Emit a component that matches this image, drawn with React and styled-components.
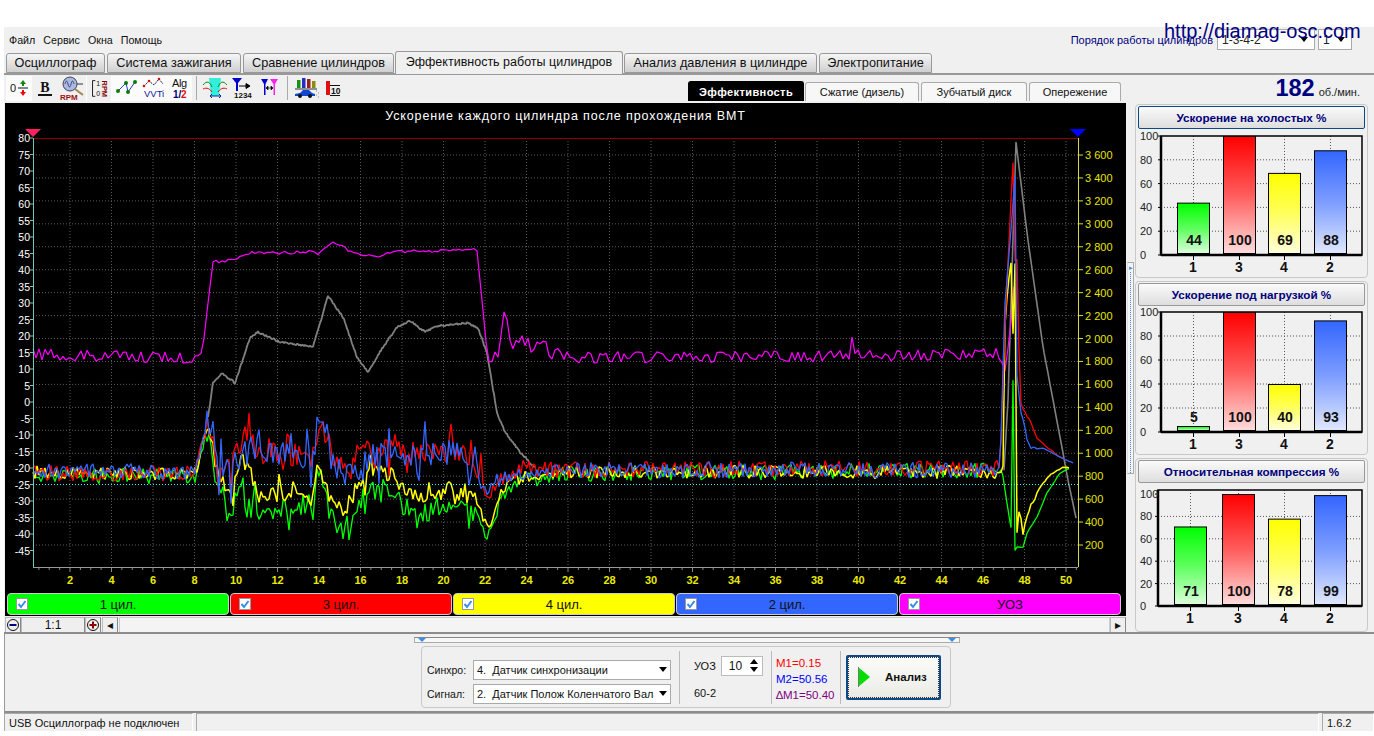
import styled, { createGlobalStyle } from 'styled-components'

const GlobalStyle = createGlobalStyle`
  html, body { margin: 0; padding: 0; background: #fff; }
  body { font-family: "Liberation Sans", Arial, sans-serif; }
  * { box-sizing: border-box; }
`

const Page = styled.div`
  width: 1374px;
  height: 736px;
  padding: 27px 0 5px 4px;
  background: #fff;
  position: relative;
  overflow: hidden;
`
const Win = styled.div`
  height: 704px;
  display: flex;
  flex-direction: column;
  background: #f0f0f0;
  color: #111;
`
const MenuBar = styled.div`
  height: 25px;
  display: flex;
  align-items: center;
  padding: 2px 22px 2px 5px;
  gap: 8px;
  font-size: 10.7px;
`
const OrderBox = styled.div`
  margin-left: auto;
  display: flex;
  align-items: center;
  gap: 3px;
  font-size: 11px;
  color: #000080;
`
const TopSelect = styled.div`
  width: ${p => p.$w}px;
  height: 21px;
  margin-left: ${p => p.$ml || 0}px;
  padding-left: 4px;
  background: #fff;
  border: 1px solid #aaa;
  display: flex;
  align-items: center;
  justify-content: space-between;
  font-size: 12px;
  color: #222;
`
const Arrow = styled.i`
  width: 0;
  height: 0;
  margin-right: 6px;
  border-left: 4px solid transparent;
  border-right: 4px solid transparent;
  border-top: 5px solid #000;
`
const SiteUrl = styled.div`
  position: absolute;
  left: 1164px;
  top: 19px;
  font-size: 20px;
  line-height: 24px;
  color: #000080;
  white-space: nowrap;
`
const TabStrip = styled.div`
  height: 23px;
  display: flex;
  align-items: flex-end;
  gap: 2px;
  padding-left: 2px;
  border-bottom: 2px solid #999;
`
const Tab = styled.div`
  width: ${p => p.$w}px;
  height: ${p => (p.$active ? 23 : 20)}px;
  margin: ${p => (p.$active ? '0 -1px -1px -1px' : '0')};
  display: flex;
  align-items: ${p => (p.$active ? 'flex-start' : 'center')};
  padding-top: ${p => (p.$active ? 3 : 0)}px;
  justify-content: center;
  font-size: ${p => (p.$active ? 12.5 : 12.7)}px;
  white-space: nowrap;
  border: 1px solid #999;
  border-bottom: ${p => (p.$active ? 'none' : '1px solid #999')};
  border-radius: 3px 3px 0 0;
  background: ${p => (p.$active ? '#f0f0f0' : 'linear-gradient(#f6f6f6, #cfcfcf)')};
  position: relative;
`
const ToolRow = styled.div`
  height: 26px;
  display: flex;
  align-items: flex-end;
`
const Tools = styled.div`
  width: 684px;
  height: 26px;
  padding-left: 2px;
  display: flex;
  align-items: center;
`
const ToolBtn = styled.div`
  width: ${p => p.$w || 26}px;
  height: 25px;
  display: flex;
  align-items: center;
  justify-content: center;
  background: ${p => (p.$lit ? '#fbfbfb' : 'transparent')};
  border-left: ${p => (p.$edge ? '1px solid #fff' : 'none')};
  border-right: ${p => (p.$edge ? '1px solid #fff' : 'none')};
`
const ToolSep = styled.div`
  width: 1px;
  height: 24px;
  margin: 0 ${p => p.$mr || 6}px 0 ${p => p.$ml || 4}px;
  background: #aaa;
`
const SubTabs = styled.div`
  display: flex;
  gap: 2px;
  align-items: flex-end;
  height: 22px;
`
const SubTab = styled.div`
  width: ${p => p.$w}px;
  height: ${p => (p.$active ? 20 : 19)}px;
  margin-right: ${p => (p.$active ? -1 : 0)}px;
  display: flex;
  align-items: center;
  justify-content: center;
  font-size: 11px;
  font-weight: ${p => (p.$active ? 700 : 400)};
  color: ${p => (p.$active ? '#fff' : '#111')};
  background: ${p => (p.$active ? '#000' : '#f7f7f7')};
  border: 1px solid ${p => (p.$active ? '#000' : '#aaa')};
  border-bottom: none;
  border-radius: 3px 3px 0 0;
  letter-spacing: ${p => (p.$active ? '0.4px' : '0')};
`
const Rpm = styled.div`
  margin-left: auto;
  padding-right: 14px;
  display: flex;
  align-items: baseline;
  gap: 4px;
  font-size: 11px;
  color: #222;
  b {
    font-size: 23.5px;
    line-height: 26px;
    color: #000080;
  }
`
const Main = styled.div`
  height: 531px;
  display: flex;
  padding: 2px 0 0 1px;
`
const LeftCol = styled.div`
  width: 1121px;
  display: flex;
  flex-direction: column;
`
const ChartPanel = styled.div`
  height: 513px;
  background: #000;
`
const ChartTitle = styled.div`
  height: 25px;
  padding-top: 6px;
  text-align: center;
  color: #fff;
  font-size: 12.5px;
  letter-spacing: 0.88px;
  line-height: 15px;
`
const ChartSvg = styled.svg`
  display: block;
`
const Legend = styled.div`
  height: 23px;
  display: flex;
  gap: 1px;
  padding-left: 2px;
`
const LegendBtn = styled.div`
  width: 222px;
  height: 22px;
  position: relative;
  display: flex;
  align-items: center;
  justify-content: center;
  font-size: 13px;
  color: #111;
  background: ${p => p.$color};
  border: 1px solid #ccc;
  border-radius: 4px;
`
const Check = styled.span`
  position: absolute;
  left: 8px;
  top: 4px;
  width: 12px;
  height: 12px;
  background: #fff;
  border: 1px solid #999;
  display: flex;
`
const ScrollRow = styled.div`
  height: 17px;
  margin-top: 1px;
  display: flex;
  align-items: stretch;
`
const ScrollBtn = styled.div`
  width: ${p => p.$w || 16}px;
  margin-left: ${p => p.$ml || 0}px;
  display: flex;
  align-items: center;
  justify-content: center;
  font-size: 12px;
  background: #efefef;
  border: 1px solid #bbb;
  border-right-color: #888;
  border-bottom-color: #888;
  color: #111;
`
const ScrollTrack = styled.div`
  flex: 1;
  margin-left: 1px;
  background: #f4f4f4;
  border: 1px solid #ccc;
  border-bottom-color: #999;
`
const VSplit = styled.div`
  width: 7px;
  height: 212px;
  margin: 159px 1px 0 1px;
  background: #f4f4f4;
  border: 1px solid #aaa;
  border-left: 1px solid #ddd;
  display: flex;
  flex-direction: column;
  align-items: center;
  color: #3a8ee6;
  font-size: 7px;
  line-height: 9px;
  &::after {
    content: '';
    flex: 1;
    width: 0;
    border-left: 1px dotted #3a8ee6;
  }
`
const Side = styled.div`
  width: 233px;
  margin-top: 1px;
  display: flex;
  flex-direction: column;
  gap: 3px;
`
const BarPanel = styled.div`
  height: 174px;
  padding: 1px 2px 0 2px;
  border: 1px solid #c8c8c8;
  border-radius: 4px;
  flex-shrink: 0;
`
const BarHead = styled.div`
  height: 23px;
  display: flex;
  align-items: center;
  justify-content: center;
  font-size: 11.7px;
  font-weight: 700;
  color: #00007a;
  background: linear-gradient(#fafafa, #dedede);
  border: 1px solid ${p => (p.$focus ? '#0c4a86' : '#999')};
  border-radius: 2px;
`
const BarSvg = styled.svg`
  display: block;
  margin: 0 -3px;
`
const Bottom = styled.div`
  height: 81px;
  border-top: 2px solid #8c8c8c;
  border-bottom: 2px solid #8c8c8c;
  border-left: 1px solid #999;
  display: flex;
  flex-direction: column;
  align-items: flex-start;
  padding: 3px 0 0 409px;
`
const HSplit = styled.div`
  width: 546px;
  height: 6px;
  background: #f7f7f7;
  border: 1px solid #aaa;
  border-top-color: #888;
  display: flex;
  align-items: center;
  justify-content: space-between;
  padding: 0 3px;
  &::before, &::after {
    content: '';
    width: 0;
    height: 0;
    border-left: 4px solid transparent;
    border-right: 4px solid transparent;
    border-top: 4px solid #3a8ee6;
  }
`
const Controls = styled.div`
  width: 530px;
  height: 62px;
  margin: 3px 0 0 7px;
  display: flex;
  align-items: center;
  border: 1px solid #c8c8c8;
  border-radius: 4px;
  font-size: 11px;
`
const SelectCol = styled.div`
  display: flex;
  flex-direction: column;
  gap: 4px;
  padding: 9px 0 0 5px;
`
const SelectRow = styled.div`
  display: flex;
  align-items: center;
  gap: 7px;
  span { width: 39px; font-size: 10.5px; }
`
const Select = styled.div`
  width: 198px;
  height: 20px;
  padding-left: 3px;
  background: #fff;
  border: 1px solid #aaa;
  display: flex;
  align-items: center;
  justify-content: space-between;
  font-size: 11px;
  white-space: nowrap;
  overflow: hidden;
  em { font-style: normal; width: 177px; overflow: hidden; }
  i { flex-shrink: 0; margin-right: 3px; }
`
const VLine = styled.div`
  width: 1px;
  height: ${p => p.$h || 53}px;
  margin-left: ${p => p.$ml}px;
  background: #bbb;
`
const UozCol = styled.div`
  width: 91px;
  padding: 0 0 0 14px;
  display: flex;
  flex-direction: column;
  gap: 11px;
`
const UozRow = styled.div`
  display: flex;
  align-items: center;
  gap: 5px;
`
const Spin = styled.div`
  width: 42px;
  height: 20px;
  background: #fff;
  border: 1px solid #bbb;
  display: flex;
  align-items: center;
  padding-left: 7px;
  justify-content: space-between;
  font-size: 12px;
`
const SpinArrows = styled.div`
  display: flex;
  flex-direction: column;
  gap: 3px;
  margin-right: 4px;
  i {
    width: 0;
    height: 0;
    border-left: 4px solid transparent;
    border-right: 4px solid transparent;
  }
  i:first-child { border-bottom: 5px solid #000; }
  i:last-child { border-top: 5px solid #000; }
`
const MeasCol = styled.div`
  width: 63px;
  padding: 4px 0 0 4px;
  display: flex;
  flex-direction: column;
  gap: 3px;
  font-size: 11.5px;
  line-height: 13px;
`
const Meas = styled.div`
  color: ${p => p.$color};
`
const RunBtn = styled.div`
  width: 95px;
  height: 45px;
  margin-left: 5px;
  display: flex;
  align-items: center;
  padding-left: 10px;
  gap: 15px;
  font-size: 11.5px;
  font-weight: 700;
  background: linear-gradient(#fbfbf9, #ebebe6);
  border: 2px solid #0c4a86;
  border-radius: 2px;
  outline: 1px dotted #333;
  outline-offset: -3px;
`
const Status = styled.div`
  height: 18px;
  display: flex;
  gap: 3px;
  font-size: 11px;
`
const StatusCell = styled.div`
  width: ${p => p.$w}px;
  flex: ${p => (p.$w ? 'none' : 1)};
  display: flex;
  align-items: center;
  padding-left: 4px;
  border-left: 1px solid #aaa;
  border-top: 1px solid #aaa;
  border-right: 1px solid #fff;
`

// ---- chart data ----
const rng = seed => () => {
  seed = (seed + 0x6d2b79f5) | 0
  let t = Math.imul(seed ^ (seed >>> 15), 1 | seed)
  t = (t + Math.imul(t ^ (t >>> 7), 61 | t)) ^ t
  return ((t ^ (t >>> 14)) >>> 0) / 4294967296
}
const lerp = (kp, x) => {
  for (let i = 1; i < kp.length; i++) {
    if (x <= kp[i][0]) {
      const [x0, y0] = kp[i - 1]
      const [x1, y1] = kp[i]
      return y0 + ((y1 - y0) * (x - x0)) / (x1 - x0 || 1)
    }
  }
  return kp[kp.length - 1][1]
}
const makeLine = (kp, ampAt, step, seed, spike = 0, down = 0.5) => {
  const r = rng(seed)
  const pts = []
  const end = kp[kp.length - 1][0]
  for (let x = kp[0][0]; x <= end; x += step) {
    const a = ampAt(x)
    let n = (r() - 0.5) * 2 * a
    if (spike && a > 8.5 && r() < 0.22) n += (r() < down ? 1 : -1) * spike * (0.5 + r())
    pts.push(`${x},${(lerp(kp, x) + n).toFixed(1)}`)
  }
  return pts.join(' ')
}

const blueKp = [[33, 471], [195, 472], [207, 418], [217, 463], [230, 470], [247, 433], [260, 457], [297, 453], [313, 460], [318, 418], [327, 437], [337, 470], [350, 477], [370, 457], [473, 450], [485, 493], [500, 478], [520, 473], [560, 470], [1000, 470], [1005, 303], [1015, 177], [1017, 377], [1020, 407], [1030, 450], [1043, 448], [1060, 457], [1073, 463]]
const redKp = [[33, 473], [195, 474], [207, 422], [217, 463], [230, 468], [247, 438], [260, 452], [297, 455], [313, 458], [318, 424], [327, 440], [337, 465], [350, 473], [370, 452], [473, 452], [485, 496], [500, 480], [520, 468], [560, 470], [1000, 468], [1006, 300], [1014, 140], [1016, 380], [1017, 257], [1020, 400], [1027, 417], [1037, 438], [1048, 448], [1060, 457], [1066, 460]]
const yellowKp = [[33, 472], [195, 474], [208, 428], [220, 480], [233, 497], [240, 457], [253, 480], [260, 497], [297, 488], [312, 503], [318, 457], [330, 503], [343, 513], [370, 473], [387, 473], [413, 497], [447, 490], [477, 497], [487, 530], [500, 493], [520, 478], [560, 472], [1000, 472], [1003, 467], [1005, 320], [1012, 253], [1014, 420], [1015, 260], [1015.5, 567], [1018, 507], [1023, 533], [1030, 507], [1040, 487], [1050, 475], [1063, 467], [1070, 468]]
const greenKp = [[33, 476], [195, 476], [208, 432], [220, 490], [233, 510], [240, 480], [253, 505], [260, 512], [297, 505], [312, 503], [318, 465], [330, 515], [343, 530], [370, 485], [387, 490], [413, 512], [447, 505], [477, 515], [487, 540], [500, 500], [520, 482], [560, 474], [1002, 470], [1008, 510], [1012, 533], [1013, 380], [1014, 330], [1015, 550], [1017, 547], [1023, 547], [1027, 533], [1037, 517], [1047, 493], [1060, 473], [1070, 468]]
const magentaKp = [[33, 354], [195, 358], [203, 347], [208, 303], [213, 262], [233, 260], [252, 253], [310, 252], [317, 254], [333, 243], [360, 255], [380, 257], [390, 252], [478, 250], [480, 280], [488, 362], [498, 354], [503, 312], [513, 343], [540, 345], [565, 358], [850, 356], [852, 334], [855, 356], [1000, 353], [1004, 377], [1010, 337], [1013, 300], [1016, 260]]
const grayKp = [[208, 417], [213, 383], [222, 373], [235, 383], [250, 338], [258, 332], [280, 342], [313, 347], [328, 296], [343, 317], [357, 357], [368, 372], [383, 347], [397, 327], [410, 321], [425, 332], [437, 326], [467, 323], [478, 328], [487, 353], [497, 413], [505, 432], [520, 452], [535, 468]]
const grayPeak = [[1004, 470], [1008, 400], [1016, 142], [1027, 233], [1043, 347], [1060, 437], [1068, 480], [1077, 523]]

const wide = (big, small, peak = 0.4) => x => {
  if (x > 1035) return 0.3
  if (x > 1000) return peak
  if (x > 212 && x < 482) return big
  return small
}
const magentaAmp = x => {
  if (x > 1013) return 0
  if (x > 203 && x < 490) return x > 213 && x < 478 ? 1.6 : 0.5
  if (x > 500 && x < 560) return 8
  return 6
}

const lines = [
  { points: makeLine(grayKp, () => 1, 1, 61), color: '#808080', w: 1.8 },
  { points: makeLine(grayPeak, () => 0.3, 2, 67), color: '#808080', w: 1.6 },
  { points: makeLine(magentaKp, magentaAmp, 3, 53), color: '#ff00ff', w: 1.2 },
  { points: makeLine(greenKp, wide(10, 8), 2, 11, 14, 0.9), color: '#00ff00', w: 1.3 },
  { points: makeLine(yellowKp, wide(9, 6.5, 5), 2, 37, 7), color: '#ffff00', w: 1.5 },
  { points: makeLine(redKp, wide(13, 8, 3), 2, 23, 16, 0.35), color: '#ff0000', w: 1.3 },
  { points: makeLine(blueKp, wide(13, 8, 3), 2, 41, 22, 0.6), color: '#3366ff', w: 1.3 },
]

const leftVals = Array.from({ length: 26 }, (_, i) => 80 - i * 5)
const rightVals = Array.from({ length: 18 }, (_, i) => 200 + i * 200)
const xVals = Array.from({ length: 25 }, (_, i) => 2 + i * 2)
const yRight = v => 545 - ((v - 200) * 390) / 3400
const xAt = v => 28.5 + v * 20.75
const fmtK = v => (v >= 1000 ? `${Math.floor(v / 1000)} ${String(v % 1000).padStart(3, '0')}` : `${v}`)

const OscChart = () => (
  <ChartSvg width="1121" height="465" viewBox="5 128 1121 465">
    {rightVals.map(v => (
      <line key={v} x1="33" x2="1078" y1={yRight(v)} y2={yRight(v)} stroke="#5c5c5c" strokeDasharray="1 2" />
    ))}
    {xVals.map(v => (
      <line key={v} x1={xAt(v)} x2={xAt(v)} y1="138" y2="567" stroke="#5c5c5c" strokeDasharray="1 2" />
    ))}
    <line x1="33" x2="1078" y1="138.5" y2="138.5" stroke="#8b0000" />
    {lines.map(l => (
      <polyline key={l.color + l.points.length} points={l.points} fill="none" stroke={l.color} strokeWidth={l.w} strokeLinejoin="bevel" />
    ))}
    <line x1="33" x2="1078" y1="484.5" y2="484.5" stroke="#33ffff" strokeDasharray="1 2" />
    <line x1="33.5" x2="33.5" y1="138" y2="567" stroke="#6fc9b8" />
    <line x1="33" x2="1078" y1="567.5" y2="567.5" stroke="#9a9a9a" />
    <line x1="1078.5" x2="1078.5" y1="138" y2="567" stroke="#d8d84a" />
    <polygon points="25,129 41,129 33,137" fill="#ff2060" />
    <polygon points="1070,129 1086,129 1078,137" fill="#0000ff" />
    {leftVals.map(v => (
      <g key={v}>
        <line x1="30" x2="33" y1={402 - v * 3.3} y2={402 - v * 3.3} stroke="#6fc9b8" />
        <text x="30" y={406 - v * 3.3} textAnchor="end" fontSize="10.5" fill="#fff" fontFamily="Liberation Sans">{v}</text>
      </g>
    ))}
    {rightVals.map(v => (
      <g key={v}>
        <line x1="1078" x2="1083" y1={yRight(v)} y2={yRight(v)} stroke="#d8d84a" />
        <text x="1085" y={yRight(v) + 4} fontSize="11" fill="#e4e400" fontFamily="Liberation Sans">{fmtK(v)}</text>
      </g>
    ))}
    {Array.from({ length: 101 }, (_, i) => i * 0.5 + 0.5).map(v => (
      <line key={v} x1={xAt(v)} x2={xAt(v)} y1="568" y2={v % 2 === 0 ? 572 : 570} stroke="#888" />
    ))}
    {xVals.map(v => (
      <text key={v} x={xAt(v)} y="584" textAnchor="middle" fontSize="11" fontWeight="700" fill="#e8e800" fontFamily="Liberation Sans">{v}</text>
    ))}
  </ChartSvg>
)

const barColors = {
  1: ['#00ff00', '#5cff5c', '#dcffdc'],
  3: ['#ff0000', '#ff5c5c', '#ffdcdc'],
  4: ['#ffff00', '#ffff5c', '#ffffdc'],
  2: ['#3366ff', '#7d9dff', '#e0e8ff'],
}

// plot coordinates are measured from the top left corner of the svg
const BarChart = ({ id, height, top, scaleTop, bottom, left, bars }) => {
  const h = bottom - (scaleTop ?? top)
  const valY = bottom - 10
  return (
    <BarSvg width="233" height={height} viewBox={`0 0 233 ${height}`}>
      <defs>
        {[1, 2, 3, 4].map(n => (
          <linearGradient key={n} id={`${id}-${n}`} x1="0" y1="0" x2="0" y2="1">
            <stop offset="0" stopColor={barColors[n][0]} />
            <stop offset="0.5" stopColor={barColors[n][1]} />
            <stop offset="1" stopColor={barColors[n][2]} />
          </linearGradient>
        ))}
      </defs>
      {[20, 40, 60, 80].map(v => (
        <line key={v} x1={left} x2="227" y1={bottom - (h * v) / 100} y2={bottom - (h * v) / 100} stroke="#555" strokeDasharray="1 2" />
      ))}
      {bars.map(b => (
        <line key={b.n} x1={b.x + 16.5} x2={b.x + 16.5} y1={top} y2={bottom} stroke="#555" strokeDasharray="1 2" />
      ))}
      <rect x={left} y={top} width={227 - left} height={bottom - top} fill="none" stroke="#000" strokeWidth="1.5" />
      <line x1={left} x2="227" y1={bottom} y2={bottom} stroke="#000" strokeWidth="2.5" />
      <line x1={left} x2={left} y1={top} y2={bottom} stroke="#000" strokeWidth="2.5" />
      {bars.map(b => {
        const bh = (h * b.v) / 100
        return (
          <g key={b.n}>
            <rect x={b.x + 0.5} y={bottom - bh + 0.5} width="32" height={Math.max(bh - 2, 1)} fill={`url(#${id}-${b.n})`} stroke="#000" />
            <text x={b.x + 17} y={valY} textAnchor="middle" fontSize="14" fontWeight="700" fill="#111" fontFamily="Liberation Sans">{b.v}</text>
            <line x1={b.x + 16.5} x2={b.x + 16.5} y1={bottom} y2={bottom + 5} stroke="#000" />
            <text x={b.x + 16} y={bottom + 17} textAnchor="middle" fontSize="14" fontWeight="700" fill="#111" fontFamily="Liberation Sans">{b.n}</text>
          </g>
        )
      })}
      {[0, 20, 40, 60, 80, 100].map(v => (
        <g key={v}>
          <line x1={left - 3} x2={left} y1={bottom - (h * v) / 100} y2={bottom - (h * v) / 100} stroke="#000" />
          <text x="5" y={bottom - (h * v) / 100 + 4} fontSize="11" fill="#222" fontFamily="Liberation Sans">{v}</text>
        </g>
      ))}
    </BarSvg>
  )
}

const barX = [42, 88, 133, 179]
const withX = (vals, xs = barX) => [1, 3, 4, 2].map((n, i) => ({ n, v: vals[i], x: xs[i] }))

// ---- toolbar icons ----
const Ico = ({ children, w = 26 }) => (
  <svg width={w} height="24" viewBox={`0 0 ${w} 24`} fontFamily="Liberation Sans">{children}</svg>
)
const ZeroIcon = () => (
  <Ico>
    <text x="4" y="16" fontSize="11" fill="#111">0</text>
    <line x1="12" x2="22" y1="12" y2="12" stroke="#111" />
    <path d="M17 4l3 4h-2v2h-2V8h-2z" fill="#0a8a0a" />
    <path d="M17 20l3-4h-2v-2h-2v2h-2z" fill="#e01010" />
  </Ico>
)
const BoldIcon = () => (
  <Ico>
    <text x="13" y="16" textAnchor="middle" fontSize="14" fontWeight="700" fontFamily="Liberation Serif" fill="#111">B</text>
    <rect x="6" y="18" width="14" height="2" fill="#111" />
  </Ico>
)
const RpmLensIcon = () => (
  <Ico>
    <circle cx="11" cy="8" r="7" fill="#a9b8e8" stroke="#444" />
    <path d="M6 8c1-4 2-4 3 0s2 4 3 0 2-4 3 0" fill="none" stroke="#334" strokeWidth="0.8" />
    <line x1="16" x2="24" y1="13" y2="19" stroke="#a08a50" strokeWidth="2" />
    <line x1="18" x2="24" y1="8" y2="8" stroke="#333" />
    <text x="1" y="23.5" fontSize="8" fontWeight="700" fill="#a01010">RPM</text>
  </Ico>
)
const RangeIcon = () => (
  <Ico>
    <path d="M9 4H6v17h3" fill="none" stroke="#111" />
    <text x="10" y="10" fontSize="7.5" fill="#111">1</text>
    <text x="10" y="21" fontSize="7.5" fill="#111">0</text>
    <text transform="translate(16 4) rotate(90)" fontSize="8" fontWeight="700" fill="#8b0000">RPM</text>
  </Ico>
)
const ZigIcon = () => (
  <Ico>
    <path d="M6 15l8-8 2 9 7-10" fill="none" stroke="#1f3fd0" />
    <g fill="#0a7a0a"><circle cx="6" cy="15" r="2" /><circle cx="14" cy="7" r="2" /><circle cx="16" cy="16" r="2" /><circle cx="23" cy="6" r="2" /></g>
  </Ico>
)
const VvtIcon = () => (
  <Ico>
    <path d="M5 10l5-5 5 4 5-6 4 5" fill="none" stroke="#222" strokeDasharray="2 1" />
    <g fill="#d01010"><circle cx="5" cy="10" r="1.3" /><circle cx="10" cy="5" r="1.3" /><circle cx="20" cy="3" r="1.3" /></g>
    <text x="5" y="21" fontSize="9.5" fill="#1020a0">VVTi</text>
  </Ico>
)
const AlgIcon = () => (
  <Ico>
    <text x="6" y="11" fontSize="11" fill="#111" textLength="15">Alg</text>
    <text x="7" y="22" fontSize="10" fontWeight="700" fill="#000080">1/</text>
    <text x="15" y="22" fontSize="10" fontWeight="700" fill="#e01010">2</text>
  </Ico>
)
const CyanIcon = () => (
  <Ico>
    <path d="M7 2h12l-2 18H9z" fill="#33eedd" />
    <path d="M1 9c4-5 7-3 9 2M25 9c-4-5-7-3-9 2" fill="none" stroke="#0a8a0a" />
    <path d="M1 13c4-2 7 0 9 3M25 13c-4-2-7 0-9 3" fill="none" stroke="#e01010" />
    <path d="M8 20h11M8 20l2-2M8 20l2 2M19 20l-2-2M19 20l-2 2" stroke="#1020a0" fill="none" />
  </Ico>
)
const OrderIcon = () => (
  <Ico>
    <path d="M3 2h10l-4 5v8H7V7z" fill="#0000cc" />
    <path d="M10 10h10M21 10l-4-2.5v5z" fill="#000" stroke="#000" />
    <text x="5" y="22" fontSize="8" fontWeight="700" fill="#111">1234</text>
  </Ico>
)
const GapIcon = () => (
  <Ico>
    <path d="M5 3h7L9.5 8v11h-1.5V8z" fill="#0000cc" />
    <path d="M14 3h8L19 8v11h-1.5V8z" fill="#ff22ee" />
    <path d="M10 12h7M10 12l2-2v4zM17 12l-2-2v4z" fill="#111" stroke="#111" strokeWidth="0.7" />
  </Ico>
)
const CarIcon = () => (
  <Ico w={28}>
    <rect x="5" y="4" width="3.5" height="8" fill="#1a8f1a" />
    <rect x="10" y="2" width="3.5" height="10" fill="#2030c0" />
    <rect x="15" y="3" width="3.5" height="9" fill="#9a2020" />
    <rect x="20" y="5" width="3.5" height="7" fill="#8c8c10" />
    <line x1="3" x2="25" y1="13" y2="13" stroke="#333" />
    <path d="M3 20v-2l5-1 3-3h6l3 3 3 1v2z" fill="#1046d0" />
    <circle cx="8" cy="20" r="2" fill="#111" />
    <circle cx="18" cy="20" r="2" fill="#111" />
    <path d="M24 15h1M26 17h1M24 19h1M26 21h1" stroke="#888" />
  </Ico>
)
const BarTenIcon = () => (
  <Ico>
    <rect x="5" y="5" width="4" height="14" fill="#e01010" />
    <rect x="9" y="9" width="10" height="1" fill="#111" />
    <rect x="9" y="19" width="10" height="1" fill="#111" />
    <text x="10" y="18" fontSize="8.5" fontWeight="700" fill="#111">10</text>
  </Ico>
)

const CheckMark = () => (
  <svg width="10" height="10" viewBox="0 0 10 10">
    <path d="M1.5 5l2.5 3 4.5-6" fill="none" stroke="#3a8ee6" strokeWidth="2" />
  </svg>
)
const ZoomIcon = ({ plus }) => (
  <svg width="14" height="14" viewBox="0 0 14 14">
    <circle cx="7" cy="7" r="5.5" fill="none" stroke="#111" />
    <rect x="3.5" y="6" width="7" height="2" fill={plus ? '#8b0000' : '#000080'} />
    {plus && <rect x="6" y="3.5" width="2" height="7" fill="#8b0000" />}
  </svg>
)

const tabs = [
  ['Осциллограф', 99],
  ['Система зажигания', 134],
  ['Сравнение цилиндров', 151],
  ['Эффективность работы цилиндров', 228, true],
  ['Анализ давления в цилиндре', 193],
  ['Электропитание', 113],
]
const legend = [
  ['1 цил.', '#00ff00'],
  ['3 цил.', '#ff0000'],
  ['4 цил.', '#ffff00'],
  ['2 цил.', '#3366ff'],
  ['УОЗ', '#ff00ff'],
]

export default function App() {
  return (
    <Page>
      <GlobalStyle />
      <Win>
        <MenuBar>
          <span>Файл</span>
          <span>Сервис</span>
          <span>Окна</span>
          <span>Помощь</span>
          <OrderBox>
            <span>Порядок работы цилиндров</span>
            <TopSelect $w={98} $ml={1}>1-3-4-2<Arrow /></TopSelect>
            <TopSelect $w={34}>1<Arrow /></TopSelect>
          </OrderBox>
        </MenuBar>
        <SiteUrl>http://diamag-osc.com</SiteUrl>
        <TabStrip>
          {tabs.map(([t, w, a]) => <Tab key={t} $w={w} $active={a}>{t}</Tab>)}
        </TabStrip>
        <ToolRow>
          <Tools>
            <ToolBtn $lit><ZeroIcon /></ToolBtn>
            <ToolBtn><BoldIcon /></ToolBtn>
            <ToolBtn $w={28}><RpmLensIcon /></ToolBtn>
            <ToolBtn $edge><RangeIcon /></ToolBtn>
            <ToolBtn $lit><ZigIcon /></ToolBtn>
            <ToolBtn $w={28} $lit><VvtIcon /></ToolBtn>
            <ToolBtn $w={26} $lit><AlgIcon /></ToolBtn>
            <ToolSep $ml={4} $mr={4} />
            <ToolBtn $w={28}><CyanIcon /></ToolBtn>
            <ToolBtn><OrderIcon /></ToolBtn>
            <ToolBtn $w={28}><GapIcon /></ToolBtn>
            <ToolSep $ml={4} $mr={3} />
            <ToolBtn $w={30}><CarIcon /></ToolBtn>
            <ToolBtn><BarTenIcon /></ToolBtn>
          </Tools>
          <SubTabs>
            <SubTab $w={116} $active>Эффективность</SubTab>
            <SubTab $w={114}>Сжатие (дизель)</SubTab>
            <SubTab $w={106}>Зубчатый диск</SubTab>
            <SubTab $w={92}>Опережение</SubTab>
          </SubTabs>
          <Rpm><b>182</b>об./мин.</Rpm>
        </ToolRow>
        <Main>
          <LeftCol>
            <ChartPanel>
              <ChartTitle>Ускорение каждого цилиндра после прохождения ВМТ</ChartTitle>
              <OscChart />
              <Legend>
                {legend.map(([t, c]) => (
                  <LegendBtn key={t} $color={c}>
                    <Check><CheckMark /></Check>
                    {t}
                  </LegendBtn>
                ))}
              </Legend>
            </ChartPanel>
            <ScrollRow>
              <ScrollBtn><ZoomIcon /></ScrollBtn>
              <ScrollBtn $w={64}>1:1</ScrollBtn>
              <ScrollBtn><ZoomIcon plus /></ScrollBtn>
              <ScrollBtn $ml={1}>◂</ScrollBtn>
              <ScrollTrack />
              <ScrollBtn>▸</ScrollBtn>
            </ScrollRow>
          </LeftCol>
          <VSplit>▸</VSplit>
          <Side>
            <BarPanel>
              <BarHead $focus>Ускорение на холостых %</BarHead>
              <BarChart id="idle" height="146" top={7} bottom={126} left={26} bars={withX([44, 100, 69, 88])} />
            </BarPanel>
            <BarPanel>
              <BarHead>Ускорение под нагрузкой %</BarHead>
              <BarChart id="load" height="146" top={6} bottom={126} left={26} bars={withX([5, 100, 40, 93])} />
            </BarPanel>
            <BarPanel>
              <BarHead>Относительная компрессия %</BarHead>
              <BarChart id="comp" height="146" top={7} scaleTop={11} bottom={123} left={23} bars={withX([71, 100, 78, 99], [39, 87, 133, 179])} />
            </BarPanel>
          </Side>
        </Main>
        <Bottom>
          <HSplit />
          <Controls>
            <SelectCol>
              <SelectRow>
                <span>Синхро:</span>
                <Select><em>4.&nbsp; Датчик синхронизации</em><Arrow /></Select>
              </SelectRow>
              <SelectRow>
                <span>Сигнал:</span>
                <Select><em>2.&nbsp; Датчик Полож Коленчатого Вала</em><Arrow /></Select>
              </SelectRow>
            </SelectCol>
            <VLine $ml={8} />
            <UozCol>
              <UozRow>
                УОЗ
                <Spin>10<SpinArrows><i /><i /></SpinArrows></Spin>
              </UozRow>
              <div>60-2</div>
            </UozCol>
            <VLine $ml={0} />
            <MeasCol>
              <Meas $color="#ff0000">M1=0.15</Meas>
              <Meas $color="#0000ff">M2=50.56</Meas>
              <Meas $color="#800080">∆M1=50.40</Meas>
            </MeasCol>
            <VLine $ml={5} />
            <RunBtn>
              <svg width="12" height="20" viewBox="0 0 12 20"><path d="M0 0l12 10L0 20z" fill="#00e000" /><path d="M0 0v20" stroke="#777" strokeWidth="2" /></svg>
              Анализ
            </RunBtn>
          </Controls>
        </Bottom>
        <Status>
          <StatusCell $w={189}>USB Осциллограф не подключен</StatusCell>
          <StatusCell />
          <StatusCell $w={52}>1.6.2</StatusCell>
        </Status>
      </Win>
    </Page>
  )
}
